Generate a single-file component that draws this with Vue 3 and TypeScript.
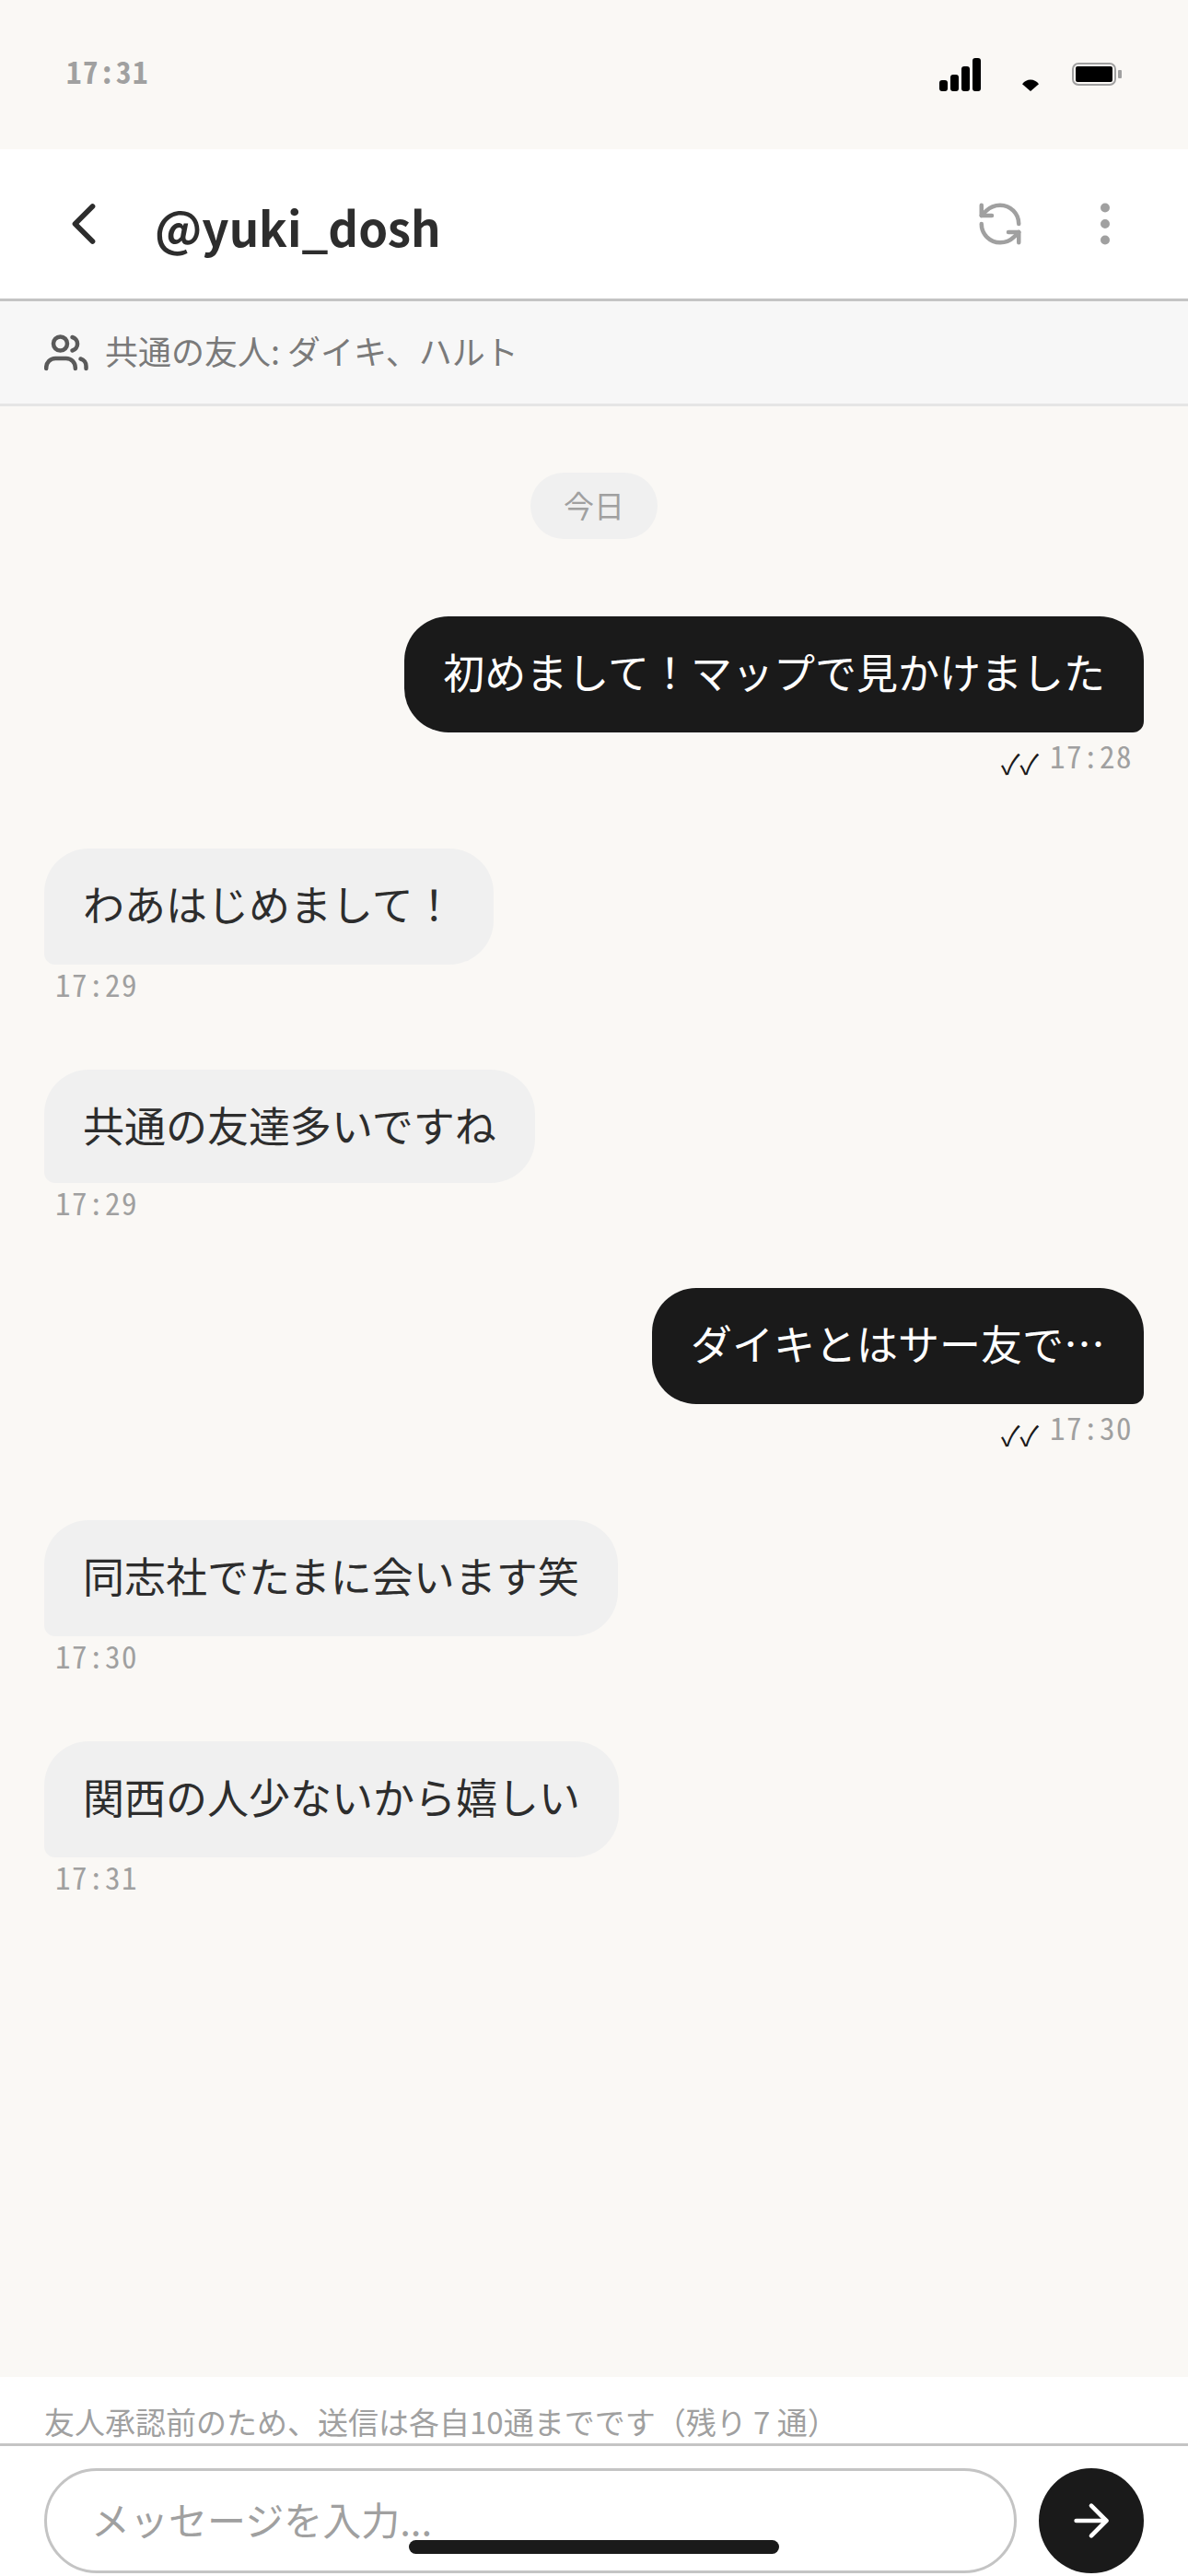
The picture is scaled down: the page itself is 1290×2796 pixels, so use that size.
<template>
  <div class="page">
    <div class="status-bar">
      <span class="status-time">17:31</span>
      <div class="status-icons">
        <div class="signal">
          <i v-for="h in signalBars" :key="h" :style="{ height: h + 'px' }"></i>
        </div>
        <svg class="wifi" width="18" height="13" viewBox="0 0 18 13">
          <path d="M0 5.2C2.5 2 5.5 0.5 9 0.5s6.5 1.5 9 4.7L9 13z" fill="#000" />
        </svg>
        <div class="battery">
          <div class="battery-body"><div class="battery-fill"></div></div>
          <div class="battery-tip"></div>
        </div>
      </div>
    </div>

    <header class="chat-header">
      <svg class="back-icon" width="76" height="76" viewBox="0 0 24 24" fill="none" stroke="#2d2d2d" stroke-width="1.8" stroke-linecap="round" stroke-linejoin="round">
        <path d="m15 18-6-6 6-6" />
      </svg>
      <h1 class="title">@yuki_dosh</h1>
      <svg class="refresh-icon" width="54" height="54" viewBox="0 0 24 24" fill="none" stroke="#a0a0a0" stroke-width="2" stroke-linecap="round" stroke-linejoin="round">
        <path d="M21 12a9 9 0 0 0-9-9 9.75 9.75 0 0 0-6.74 2.74L3 8" />
        <path d="M3 3v5h5" />
        <path d="M3 12a9 9 0 0 0 9 9 9.75 9.75 0 0 0 6.74-2.74L21 16" />
        <path d="M16 16h5v5" />
      </svg>
      <svg class="more-icon" width="60" height="60" viewBox="0 0 24 24" fill="none" stroke="#a0a0a0" stroke-width="2" stroke-linecap="round" stroke-linejoin="round">
        <circle cx="12" cy="5" r="1" />
        <circle cx="12" cy="12" r="1" />
        <circle cx="12" cy="19" r="1" />
      </svg>
    </header>

    <div class="mutual-bar">
      <svg width="48" height="40" viewBox="0 0 48 40" fill="none" stroke="#5a5a5a" stroke-width="4.5" stroke-linecap="round">
        <circle cx="17.5" cy="10" r="7.5" />
        <path d="M2.2 37v-1a10 10 0 0 1 10-10h11.6a10 10 0 0 1 10 10v1" />
        <path d="M30.5 3a7.5 7.5 0 0 1 0 14.5" />
        <path d="M39.5 26.5a8 8 0 0 1 6 8V37" />
      </svg>
      <span class="mutual-text">共通の友人: ダイキ、ハルト</span>
    </div>

    <main class="messages">
      <div class="date-row"><span class="date-pill">今日</span></div>
      <div
        v-for="(msg, index) in messages"
        :key="index"
        class="message"
        :class="msg.mine ? 'mine' : 'theirs'"
      >
        <div class="bubble" :class="{ compact: msg.compact }">{{ msg.text }}</div>
        <div class="meta">
          <span v-if="msg.mine" class="checks">✓✓</span>
          <span class="time">{{ msg.time }}</span>
        </div>
      </div>
    </main>

    <footer class="composer">
      <p class="limit-note">{{ limitNote }}</p>
      <div class="input-row">
        <input class="message-input" type="text" placeholder="メッセージを入力..." />
        <button class="send-btn" type="button">
          <svg width="56" height="56" viewBox="0 0 24 24" fill="none" stroke="#fff" stroke-width="2" stroke-linecap="round" stroke-linejoin="round">
            <path d="M5 12h14" />
            <path d="m12 5 7 7-7 7" />
          </svg>
        </button>
      </div>
      <div class="home-indicator"></div>
    </footer>
  </div>
</template>

<script setup lang="ts">
interface Message {
  text: string
  time: string
  mine: boolean
  compact?: boolean
}

const signalBars = [12, 18, 27, 36]

// full-width punctuation
const limitNote = '友人承認前のため、送信は各自10通までです\uFF08残り 7 通\uFF09'

const messages: Message[] = [
  { text: '初めまして\uFF01マップで見かけました', time: '17:28', mine: true },
  { text: 'わあはじめまして\uFF01', time: '17:29', mine: false },
  { text: '共通の友達多いですね', time: '17:29', mine: false, compact: true },
  { text: 'ダイキとはサー友で…', time: '17:30', mine: true },
  { text: '同志社でたまに会います笑', time: '17:30', mine: false },
  { text: '関西の人少ないから嬉しい', time: '17:31', mine: false },
]
</script>

<style>
html,
body {
  margin: 0;
  background: #faf8f5;
}
</style>

<style scoped>
.page {
  width: 1290px;
  height: 2796px;
  display: flex;
  flex-direction: column;
  background: #faf8f5;
  font-family: "Noto Sans CJK JP", "Noto Sans", sans-serif;
  overflow: hidden;
}

.status-bar {
  height: 162px;
  flex-shrink: 0;
  padding: 0 72px;
  box-sizing: border-box;
  display: flex;
  justify-content: space-between;
  align-items: flex-start;
}

.status-time {
  margin-top: 54px;
  font-family: "Noto Sans Mono CJK JP", "Liberation Mono", monospace;
  font-size: 33px;
  line-height: 46px;
  font-weight: 700;
  letter-spacing: 1.5px;
  color: #a0a0a0;
}

.status-icons {
  display: flex;
  align-items: flex-start;
}

.signal {
  margin-top: 63px;
  height: 36px;
  display: flex;
  align-items: flex-end;
  gap: 3px;
}

.signal i {
  display: block;
  width: 9px;
  background: #000;
  border-radius: 3px;
}

.wifi {
  margin: 86px 0 0 45px;
}

.battery {
  margin: 68px 0 0 36px;
  display: flex;
  align-items: center;
  gap: 2px;
}

.battery-body {
  width: 48px;
  height: 25px;
  box-sizing: border-box;
  padding: 2px;
  border: 2px solid #a0a0a0;
  border-radius: 7px;
}

.battery-fill {
  height: 100%;
  background: #000;
  border-radius: 2px;
}

.battery-tip {
  width: 4px;
  height: 9px;
  background: #a0a0a0;
  border-radius: 1px;
}

.chat-header {
  height: 165px;
  flex-shrink: 0;
  box-sizing: border-box;
  padding: 0 60px 0 53px;
  display: flex;
  align-items: center;
  background: #fff;
  border-bottom: 3px solid #c4c4c4;
}

.title {
  flex: 1;
  margin: 6px 0 0 39px;
  font-size: 51px;
  font-weight: 700;
  color: #2d2d2d;
}

.more-icon {
  margin-left: 57px;
}

.mutual-bar {
  height: 114px;
  flex-shrink: 0;
  box-sizing: border-box;
  padding: 0 48px;
  display: flex;
  align-items: center;
  gap: 18px;
  background: #f7f7f7;
  border-bottom: 3px solid #e5e5e5;
  font-size: 36px;
  color: #7a7a7a;
}

.mutual-text {
  padding-bottom: 6px;
}

.messages {
  flex: 1;
  padding: 72px 48px 0;
}

.date-row {
  display: flex;
  justify-content: center;
  margin-bottom: 84px;
}

.date-pill {
  height: 72px;
  box-sizing: border-box;
  padding: 0 36px 3px;
  display: flex;
  align-items: center;
  border-radius: 36px;
  background: #f0f0f0;
  font-size: 33px;
  color: #a0a0a0;
}

.message {
  display: flex;
  flex-direction: column;
  margin-bottom: 72px;
}

.message.theirs {
  align-items: flex-start;
}

.message.mine {
  align-items: flex-end;
}

.bubble {
  padding: 27px 42px 33px;
  font-size: 45px;
  line-height: 66px;
  border-radius: 48px;
}

.bubble.compact {
  padding-bottom: 30px;
}

.mine .bubble {
  background: #1a1a1a;
  color: #fff;
  border-bottom-right-radius: 12px;
}

.theirs .bubble {
  background: #f0f0f0;
  color: #2d2d2d;
  border-bottom-left-radius: 12px;
}

.meta {
  display: flex;
  align-items: flex-start;
  gap: 12px;
  padding: 3px 12px 0;
  height: 39px;
}

.mine .meta {
  padding-top: 7px;
  height: 47px;
}

.time {
  font-family: "Noto Sans Mono CJK JP", "Liberation Mono", monospace;
  font-size: 33px;
  line-height: 36px;
  letter-spacing: 1.5px;
  color: #a0a0a0;
}

.checks {
  margin-top: 8px;
  font-size: 30px;
  line-height: 36px;
  color: #1a1a1a;
}

.composer {
  position: relative;
  flex-shrink: 0;
  background: #fff;
}

.limit-note {
  margin: 0;
  height: 75px;
  box-sizing: border-box;
  padding: 24px 48px 0;
  font-size: 33px;
  line-height: 48px;
  color: #a0a0a0;
  border-bottom: 3px solid #c4c4c4;
}

.input-row {
  display: flex;
  gap: 24px;
  padding: 24px 48px 3px;
}

.message-input {
  flex: 1;
  min-width: 0;
  height: 114px;
  box-sizing: border-box;
  padding: 0 48px 6px;
  border: 3px solid #c4c4c4;
  border-radius: 57px;
  outline: none;
  background: #fff;
  font-family: inherit;
  font-size: 42px;
  color: #2d2d2d;
}

.message-input::placeholder {
  color: #a0a0a0;
  opacity: 1;
}

.send-btn {
  width: 114px;
  height: 114px;
  flex-shrink: 0;
  padding: 0;
  border: 0;
  border-radius: 50%;
  background: #1a1a1a;
  display: flex;
  align-items: center;
  justify-content: center;
}

.home-indicator {
  position: absolute;
  left: 444px;
  bottom: 24px;
  width: 402px;
  height: 15px;
  border-radius: 8px;
  background: #1a1a1a;
}
</style>
